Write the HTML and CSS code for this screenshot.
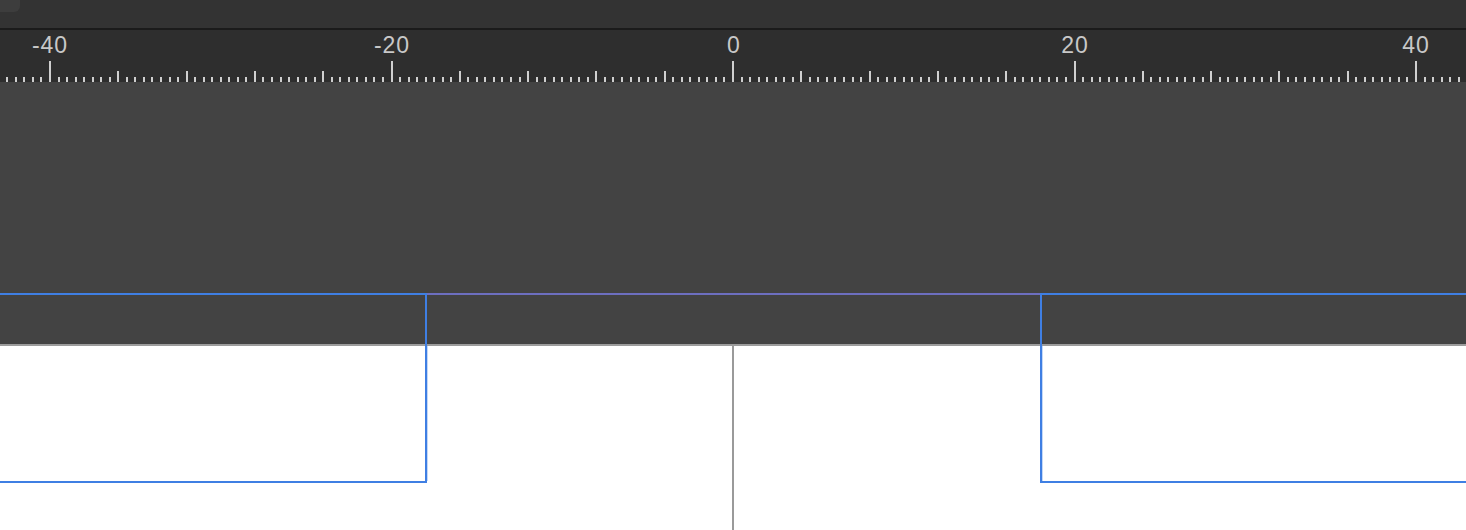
FILE: index.html
```html
<!DOCTYPE html>
<html>
<head>
<meta charset="utf-8">
<link rel="stylesheet" href="styles.css">
</head>
<body>
<div class="app">
  <div class="topbar"><div class="tab"></div></div>
  <div class="divider"></div>
  <div class="ruler">
    <svg class="ruler-svg" width="1466" height="52" viewBox="0 0 1466 52">
      <g id="ticks" class="ticks"></g>
      <g class="labels">
        <text x="50" y="22.5">-40</text>
        <text x="392" y="22.5">-20</text>
        <text x="734" y="22.5">0</text>
        <text x="1075" y="22.5">20</text>
        <text x="1416" y="22.5">40</text>
      </g>
    </svg>
  </div>
  <div class="stage"></div>
  <div class="baseline"></div>
  <div class="paper"></div>
  <svg class="overlay" width="1466" height="530" viewBox="0 0 1466 530">
    <rect class="axis" x="732" y="346" width="2" height="184"/>
    <rect class="halo" x="427" y="346" width="1" height="135"/>
    <rect class="halo" x="1042" y="346" width="1" height="135"/>
    <rect class="blue" x="0" y="293" width="427" height="2"/>
    <rect class="purple" x="427" y="293" width="613" height="2"/>
    <rect class="blue" x="1040" y="293" width="426" height="2"/>
    <rect class="blue" x="425" y="293" width="2" height="190"/>
    <rect class="blue" x="1040" y="293" width="2" height="190"/>
    <rect class="blue" x="0" y="481" width="427" height="2"/>
    <rect class="blue" x="1040" y="481" width="426" height="2"/>
  </svg>
</div>
<script src="script.js"></script>
</body>
</html>
```

FILE: styles.css
```css
html, body {
  margin: 0;
  padding: 0;
  width: 1466px;
  height: 530px;
  overflow: hidden;
  background: #ffffff;
}
.app {
  position: relative;
  width: 1466px;
  height: 530px;
  display: flex;
  flex-direction: column;
}
.topbar {
  height: 28px;
  background: #333333;
  flex: none;
}
.tab {
  width: 20px;
  height: 12px;
  background: #3d3d3d;
  border-bottom-right-radius: 6px;
}
.divider {
  height: 2px;
  background: #1b1b1b;
  flex: none;
}
.ruler {
  height: 52px;
  background: #2e2e2e;
  flex: none;
}
.ruler-svg {
  display: block;
}
.ticks line {
  stroke: #cfcfcf;
  stroke-width: 2;
}
.labels text {
  font-family: "Liberation Sans", Arial, sans-serif;
  font-size: 23px;
  letter-spacing: 1px;
  fill: #c8c8c8;
  text-anchor: middle;
}
.stage {
  height: 262px;
  background: #434343;
  flex: none;
}
.baseline {
  height: 2px;
  background: #9c9c9c;
  flex: none;
}
.paper {
  flex: 1;
  background: #ffffff;
}
.overlay {
  position: absolute;
  left: 0;
  top: 0;
  pointer-events: none;
}
.axis { fill: #9a9a9a; }
.blue { fill: #3f7fe3; }
.purple { fill: #6d6fc0; }
.halo { fill: #c4d8f6; }
```

FILE: script.js
```js
(function () {
  var g = document.getElementById('ticks');
  var ns = 'http://www.w3.org/2000/svg';
  var scale = 17.075;
  for (var i = -86; i <= 86; i++) {
    var u = i / 2;
    var x = Math.round(733 + u * scale);
    var top;
    if (i % 40 === 0) top = 31;
    else if (i % 8 === 0) top = 41;
    else top = 47;
    var l = document.createElementNS(ns, 'line');
    l.setAttribute('x1', x);
    l.setAttribute('x2', x);
    l.setAttribute('y1', top);
    l.setAttribute('y2', 52);
    g.appendChild(l);
  }
})();
```
